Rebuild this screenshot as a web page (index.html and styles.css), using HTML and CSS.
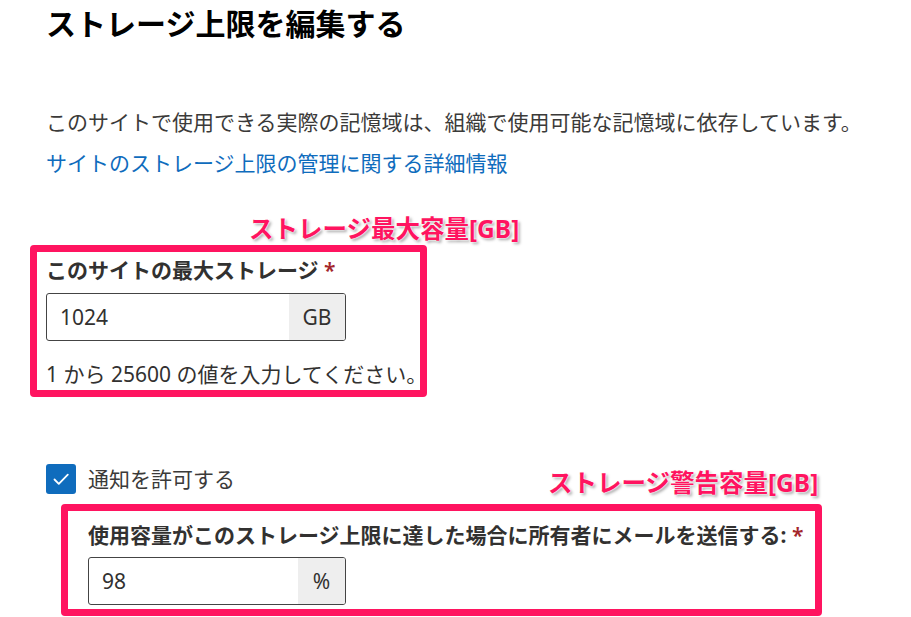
FILE: index.html
```html
<!DOCTYPE html>
<html lang="ja">
<head>
<meta charset="utf-8">
<title>ストレージ上限を編集する</title>
<link rel="stylesheet" href="styles.css">
</head>
<body>
<main class="page">
  <h1 class="title">ストレージ上限を編集する</h1>
  <p class="desc">このサイトで使用できる実際の記憶域は、組織で使用可能な記憶域に依存しています。</p>
  <a class="link" href="#">サイトのストレージ上限の管理に関する詳細情報</a>

  <section class="callout callout-max">
    <span class="note note-max">ストレージ最大容量[GB]</span>
    <div class="label">このサイトの最大ストレージ <span class="req">*</span></div>
    <div class="field field-max">
      <span class="value">1024</span>
      <span class="suffix suffix-gb">GB</span>
    </div>
    <div class="help">1 から 25600 の値を入力してください。</div>
  </section>

  <div class="check-row">
    <span class="checkbox">
      <svg viewBox="0 0 30 30" width="30" height="30"><path d="M8.5 15.5 L12.8 19.8 L21.8 10.6" fill="none" stroke="#fff" stroke-width="1.8" stroke-linecap="round" stroke-linejoin="round"/></svg>
    </span>
    <span class="check-label">通知を許可する</span>
  </div>

  <section class="callout callout-warn">
    <span class="note note-warn">ストレージ警告容量[GB]</span>
    <div class="label">使用容量がこのストレージ上限に達した場合に所有者にメールを送信する: <span class="req">*</span></div>
    <div class="field field-warn">
      <span class="value">98</span>
      <span class="suffix suffix-pct">%</span>
    </div>
  </section>
</main>
</body>
</html>
```

FILE: styles.css
```css
html, body {
  margin: 0;
  padding: 0;
  background: #ffffff;
}

body {
  font-family: "Noto Sans", "Noto Sans CJK JP", sans-serif;
  color: #323130;
  width: 911px;
  height: 617px;
  overflow: hidden;
}

.page {
  padding-left: 46px;
  display: flex;
  flex-direction: column;
  align-items: flex-start;
}

.title {
  margin: 0;
  font-size: 30px;
  line-height: 47px;
  font-weight: 700;
  color: #000000;
}

.desc {
  margin: 60px 0 0;
  font-size: 21px;
  line-height: 30px;
  color: #3b3a39;
}

.link {
  margin-top: 11px;
  font-size: 21px;
  line-height: 30px;
  color: #0f6cbd;
  text-decoration: none;
}

.callout {
  position: relative;
  border: 7px solid #ff1460;
  border-radius: 4px;
  box-sizing: border-box;
}

.callout-max {
  margin: 67px 0 0 -16px;
  width: 397px;
  padding: 3px 0 0 9px;
  height: 152px;
}

.callout-warn {
  margin: 10px 0 0 15px;
  width: 761px;
  height: 112px;
  padding: 9px 0 0 20px;
}

.note {
  position: absolute;
  font-size: 24.5px;
  line-height: 30px;
  font-weight: 700;
  color: #ff1460;
  white-space: nowrap;
  text-shadow: 0 0 2px #fff, 0 0 2px #fff, 2px 2px 3px rgba(0, 0, 0, 0.35);
}

.note-max {
  top: -38px;
  left: 212px;
}

.note-warn {
  top: -43px;
  left: 480px;
}

.label {
  font-size: 21px;
  line-height: 30px;
  font-weight: 700;
  color: #323130;
  white-space: nowrap;
}

.req {
  color: #a4262c;
  font-weight: 600;
}

.field {
  margin-top: 8px;
  width: 300px;
  height: 48px;
  box-sizing: border-box;
  border: 1px solid #444444;
  border-radius: 3px;
  display: flex;
  align-items: stretch;
  overflow: hidden;
}

.field-warn {
  width: 258px;
  margin-top: 7px;
}

.value {
  flex: 1;
  padding-left: 13px;
  font-size: 21px;
  line-height: 46px;
  color: #323130;
}

.suffix {
  background: #eeeeee;
  font-size: 21px;
  line-height: 46px;
  color: #323130;
  text-align: center;
}

.suffix-gb {
  width: 56px;
}

.suffix-pct {
  width: 47px;
}

.help {
  margin-top: 18px;
  font-size: 21px;
  line-height: 30px;
  color: #323130;
  white-space: nowrap;
}

.check-row {
  margin-top: 67px;
  display: flex;
  align-items: center;
  gap: 12px;
  height: 30px;
}

.checkbox {
  width: 30px;
  height: 30px;
  border-radius: 3px;
  background: #0f6cbd;
  display: flex;
}

.check-label {
  font-size: 21px;
  line-height: 30px;
  color: #3b3a39;
}
```
